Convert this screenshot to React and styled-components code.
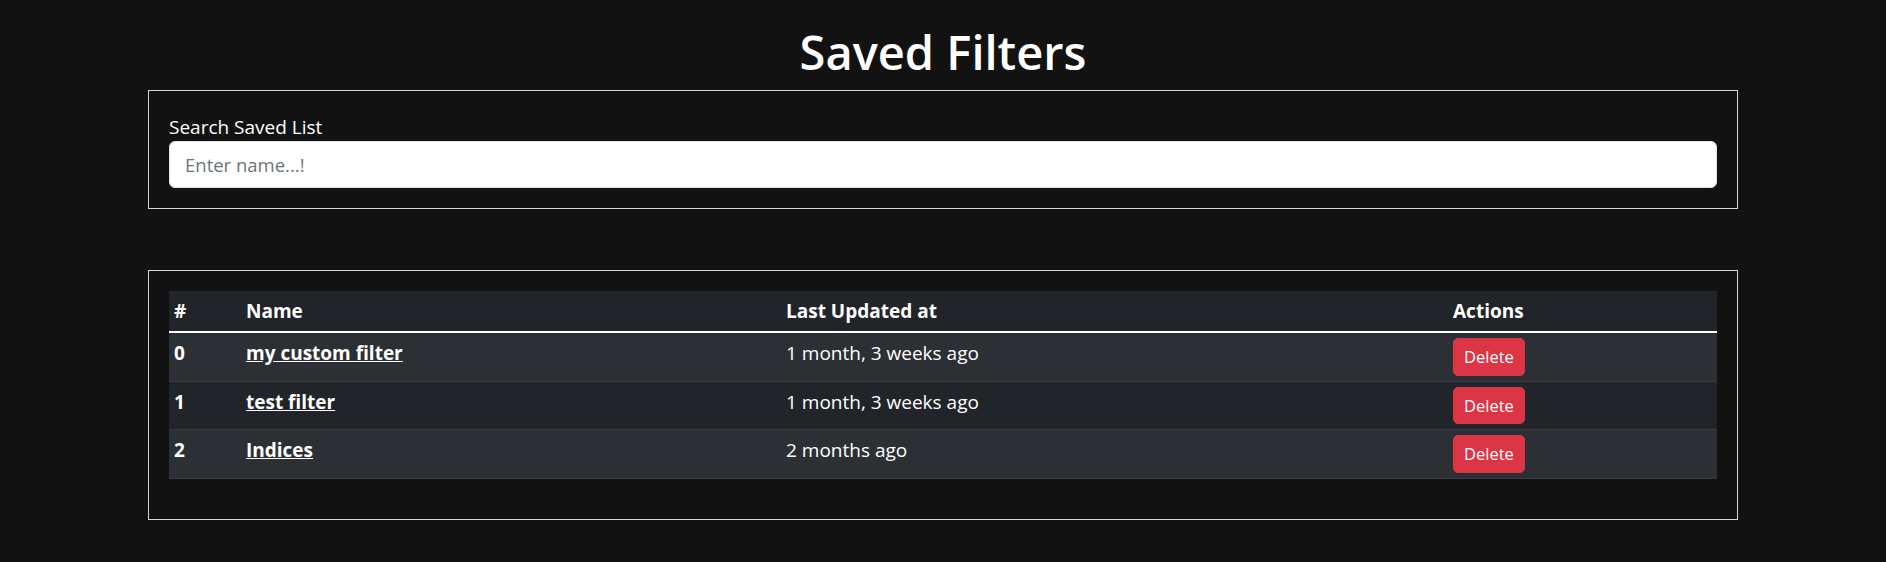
import React from "react";
import styled, { createGlobalStyle } from "styled-components";

const GlobalStyle = createGlobalStyle`
    html, body {
        margin: 0;
        padding: 0;
        background: #121212;
    }
    body {
        font-family: "Segoe UI", "Open Sans", "Noto Sans", sans-serif;
        font-size: 19px;
        line-height: 1.5;
        color: #fff;
    }
    * { box-sizing: border-box; }
`

const filters = [
    { id: 0, name: "my custom filter", updated: "1 month, 3 weeks ago" },
    { id: 1, name: "test filter", updated: "1 month, 3 weeks ago" },
    { id: 2, name: "Indices", updated: "2 months ago" },
];

const App = () => {
    return (
        <>
            <GlobalStyle />
            <Page>
                <Title>Saved Filters</Title>

                <Panel>
                    <Label htmlFor="search">Search Saved List</Label>
                    <Input id="search" type="text" placeholder="Enter name...!" />
                </Panel>

                <Panel spaced>
                    <Table>
                        <colgroup>
                            <col style={{ width: 72 }} />
                            <col style={{ width: 540 }} />
                            <col style={{ width: 667 }} />
                            <col />
                        </colgroup>
                        <thead>
                            <tr>
                                <Th>#</Th>
                                <Th>Name</Th>
                                <Th>Last Updated at</Th>
                                <Th>Actions</Th>
                            </tr>
                        </thead>
                        <tbody>
                            {filters.map((f, i) => (
                                <Row key={f.id} striped={i % 2 === 0}>
                                    <Th scope="row">{f.id}</Th>
                                    <Td><NameLink href="#">{f.name}</NameLink></Td>
                                    <Td>{f.updated}</Td>
                                    <Td><DeleteButton>Delete</DeleteButton></Td>
                                </Row>
                            ))}
                        </tbody>
                    </Table>
                </Panel>
            </Page>
        </>
    )
}

const Page = styled.div`
    max-width: 1650px;
    margin: 0 auto;
    padding: 0 30px;
`

const Title = styled.h1`
    margin: 0;
    padding-top: 22px;
    margin-bottom: 8px;
    text-align: center;
    font-size: 47px;
    font-weight: 600;
    line-height: 60px;
`

const Panel = styled.div`
    border: 1px solid #d6d6d6;
    padding: 20px;
    margin-top: ${props => props.spaced ? '61px' : '0'};
`

const Label = styled.label`
    display: block;
    font-size: 19px;
    line-height: 30px;
    padding-top: 1px;
    margin-bottom: -1px;
`

const Input = styled.input`
    display: block;
    width: 100%;
    height: 47px;
    padding: 0 15px;
    font-family: inherit;
    font-size: 18.5px;
    color: #212529;
    background: #fff;
    border: 1px solid #dee2e6;
    border-radius: 6px;
    outline: none;
    &::placeholder {
        color: #6c757d;
    }
`

const Table = styled.table`
    width: 100%;
    border-collapse: collapse;
    table-layout: fixed;
    margin-bottom: 20px;
    background: #212529;
    thead tr {
        border-bottom: 2px solid #fff;
    }
    thead th {
        vertical-align: bottom;
    }
`

const Row = styled.tr`
    background: ${props => props.striped ? '#2c3034' : '#212529'};
    border-bottom: 1px solid #373b3e;
`

const Th = styled.th`
    text-align: left;
    font-weight: 700;
    padding: 5px;
    line-height: 30px;
    vertical-align: top;
`

const Td = styled.td`
    padding: 5px;
    line-height: 30px;
    vertical-align: top;
`

const NameLink = styled.a`
    color: #fff;
    font-weight: 700;
    text-decoration: underline;
`

const DeleteButton = styled.button`
    display: block;
    font-family: inherit;
    font-size: 16.5px;
    line-height: 25.7px;
    padding: 5px 10px;
    color: #fff;
    background: #dc3545;
    border: 1px solid #dc3545;
    border-radius: 5px;
    cursor: pointer;
`

export default App;
